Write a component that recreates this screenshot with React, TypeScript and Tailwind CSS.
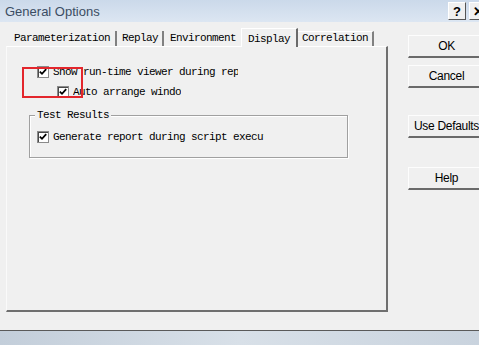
import React from "react";

function Check() {
  return (
    <span className="w-[12px] h-[12px] shrink-0 bg-white border border-[#8a8a8a] shadow-[inset_1px_1px_0_#4a4a4a] flex items-center justify-center">
      <svg width="8" height="8" viewBox="0 0 8 8">
        <path d="M0.8 3.6 L3 5.8 L7.2 1.2" stroke="#000" strokeWidth="1.8" fill="none" />
      </svg>
    </span>
  );
}

function CheckRow({ label, width, className }: { label: string; width: string; className: string }) {
  return (
    <div className={`flex items-center h-[12px] ${className}`}>
      <Check />
      <span className={`ml-[4px] overflow-hidden whitespace-nowrap leading-[12px] ${width}`}>{label}</span>
    </div>
  );
}

function Btn({ label, className }: { label: string; className: string }) {
  return (
    <div
      className={`w-[78px] h-[23px] shrink-0 flex items-center justify-center border-t border-l border-t-[#fdfdfd] border-l-[#fdfdfd] border-b-2 border-b-[#6a6a6a] border-r-2 border-r-[#6a6a6a] bg-[#f0f0f0] text-[12px] tracking-[-0.3px] text-black ${className}`}
    >
      {label}
    </div>
  );
}

export default function App() {
  const mono = "font-['Liberation_Mono',monospace] text-[11px] tracking-[-0.6px] text-black";
  return (
    <div className="w-[479px] h-[345px] overflow-hidden bg-[#f0f0f0] flex flex-col font-['Liberation_Sans',Arial,sans-serif]">
      {/* Title bar */}
      <div className="h-[22px] shrink-0 flex items-center bg-gradient-to-b from-[#cbd9ea] to-[#dce6f2] overflow-hidden">
        <span className="ml-[5px] text-[13px] text-[#3b4d63] leading-none">General Options</span>
        <div className="ml-auto flex items-center gap-[3px] mr-[-8px]">
          <div className="w-[18px] h-[18px] bg-[#f0f0f0] border-t border-l border-white border-b border-r border-b-[#555] border-r-[#555] flex items-center justify-center text-[13px] font-bold leading-none text-black">
            ?
          </div>
          <div className="w-[18px] h-[18px] bg-[#f0f0f0] border-t border-l border-white border-b border-r border-b-[#555] border-r-[#555] flex items-center justify-center text-[13px] font-bold leading-none text-black">
            ✕
          </div>
        </div>
      </div>

      {/* Body */}
      <div className="flex-1 flex overflow-hidden">
        {/* Left: tabs + panel */}
        <div className="ml-[6px] pt-[6px] flex flex-col w-[382px] shrink-0">
          <div className={`flex items-end h-[18px] ${mono}`}>
            <div className="ml-[2px] w-[109px] h-[15px] pl-[6px] border-r-2 border-r-[#808080] leading-[12px] pt-[1px]">
              Parameterization
            </div>
            <div className="w-[47px] h-[15px] pl-[5px] border-r-2 border-r-[#808080] leading-[12px] pt-[1px]">
              Replay
            </div>
            <div className="w-[77px] h-[15px] pl-[6px] leading-[12px] pt-[1px]">Environment</div>
            <div className="relative z-10 w-[57px] h-[19px] mb-[-1px] pl-[6px] pt-[4px] bg-[#f0f0f0] border-t border-l border-t-white border-l-white border-r-2 border-r-[#6a6a6a] leading-[12px]">
              Display
            </div>
            <div className="w-[76px] h-[15px] pl-[4px] border-r-2 border-r-[#808080] border-t border-t-white leading-[12px]">
              Correlation
            </div>
          </div>

          {/* Panel */}
          <div className={`relative h-[266px] border-t border-l border-t-white border-l-[#fafafa] border-r-2 border-b-2 border-r-[#6f6f6f] border-b-[#6f6f6f] flex flex-col ${mono}`}>
            <CheckRow label="Show run-time viewer during replay" width="w-[185px]" className="ml-[30px] mt-[19px]" />
            <CheckRow label="Auto arrange windows" width="w-[108px]" className="ml-[50px] mt-[8px]" />

            <div className="relative ml-[22px] mt-[17px] w-[319px] h-[43px] border border-[#a0a0a0] shadow-[inset_1px_1px_0_#fff,1px_1px_0_#fff] pt-[15px] pl-[7px]">
              <span className="absolute left-[5px] top-[-7px] px-[2px] bg-[#f0f0f0] leading-[12px]">Test Results</span>
              <CheckRow label="Generate report during script execution" width="w-[211px]" className="" />
            </div>

            {/* red highlight */}
            <div className="absolute left-[15px] top-[20px] w-[61px] h-[31px] border-2 border-[#e3262c] pointer-events-none" />
          </div>
        </div>

        {/* Right buttons */}
        <div className="ml-[20px] pt-[13px] flex flex-col">
          <Btn label="OK" className="" />
          <Btn label="Cancel" className="mt-[7px]" />
          <Btn label="Use Defaults" className="mt-[27px]" />
          <Btn label="Help" className="mt-[29px]" />
        </div>
      </div>

      {/* bottom frame + desktop strip */}
      <div className="h-[1px] shrink-0 bg-[#5a5a5a]" />
      <div className="h-[14px] shrink-0 bg-gradient-to-r from-[#c3ceda] via-[#d8e0e8] to-[#c9d3de]" />
    </div>
  );
}
